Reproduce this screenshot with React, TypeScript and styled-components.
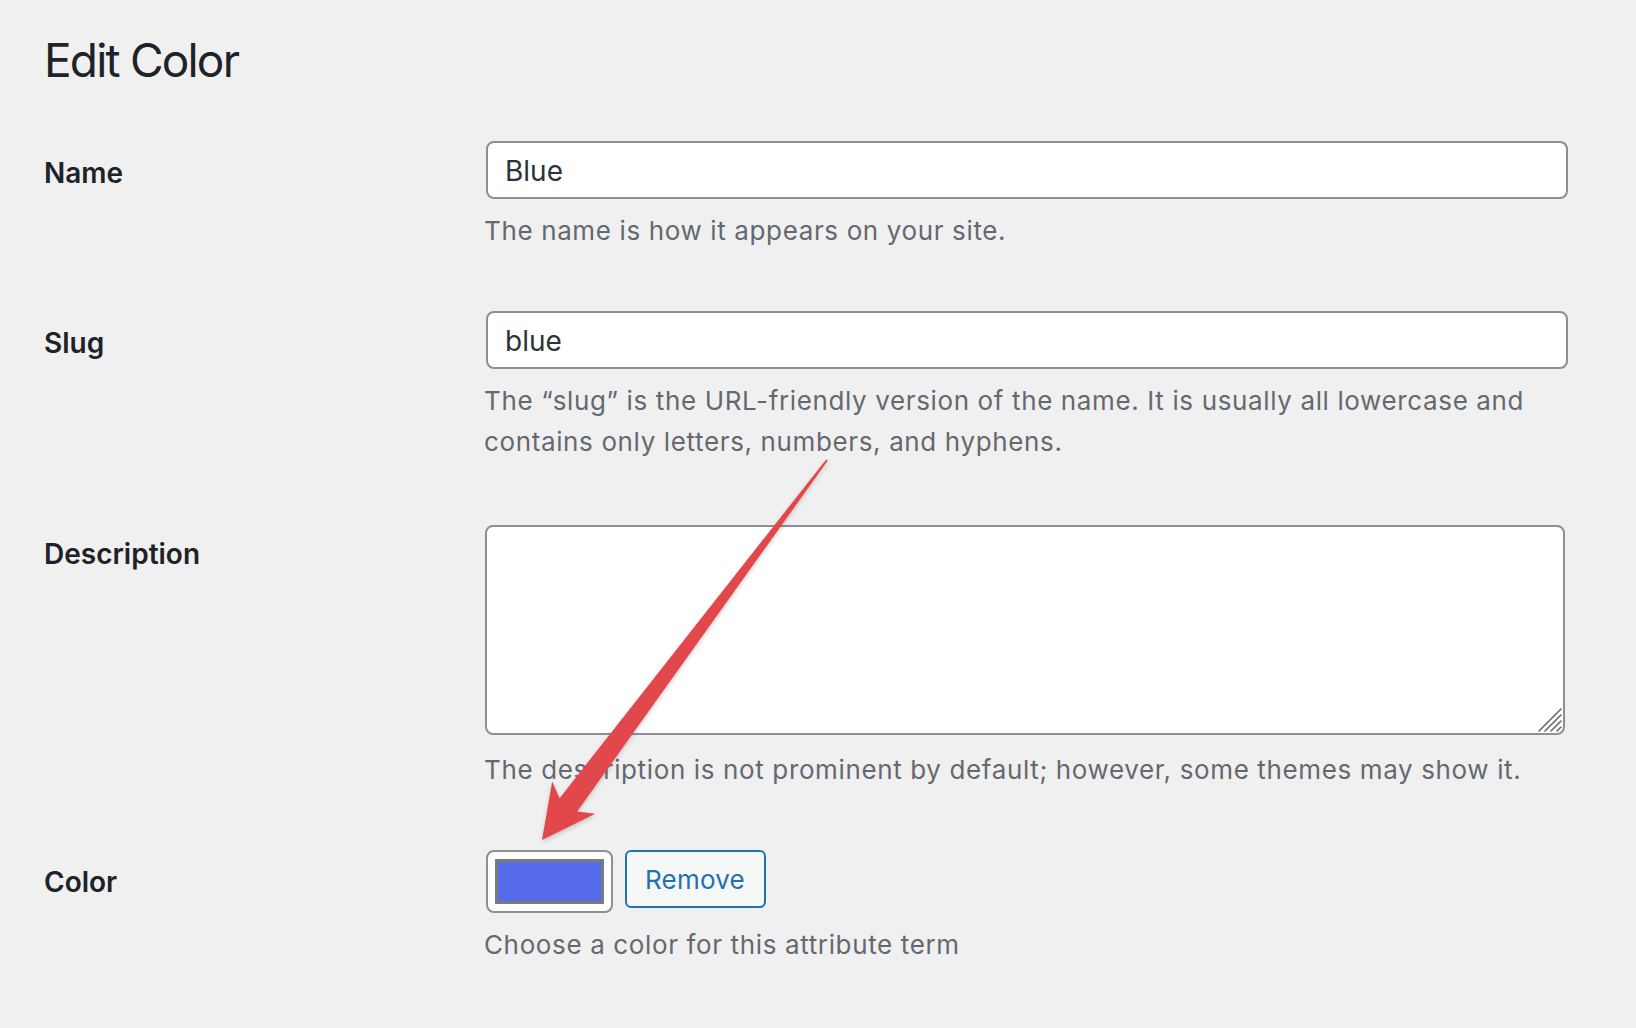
import React from "react";
import styled, { createGlobalStyle } from "styled-components";

const GlobalStyle = createGlobalStyle`
  html, body {
    margin: 0;
    padding: 0;
    background: #f0f0f1;
  }
  body {
    font-family: Inter, "Noto Sans", "Liberation Sans", sans-serif;
    color: #1d2327;
  }
  * { box-sizing: border-box; }
`;

const Page = styled.div`
  position: relative;
  width: 1636px;
  min-height: 1028px;
  padding: 30px 68px 0 44px;
`;

const Title = styled.h1`
  margin: 0 0 21px;
  font-size: 46px;
  line-height: 60px;
  font-weight: 400;
  color: #1d2327;
  letter-spacing: -1.8px;
`;

const Form = styled.div`
  display: flex;
  flex-direction: column;
`;

const Row = styled.div`
  display: grid;
  grid-template-columns: 442px 1fr;
  padding: 30px 0;
  align-items: start;
`;

const Label = styled.label`
  padding-top: 14px;
  font-size: 28px;
  line-height: 36px;
  font-weight: 600;
  color: #1d2327;
`;

const Field = styled.div`
  display: flex;
  flex-direction: column;
`;

const TextInput = styled.input`
  width: 100%;
  height: 58px;
  margin: 0;
  padding: 2px 17px 0;
  border: 2px solid #8c8f94;
  border-radius: 8px;
  background: #fff;
  font-family: inherit;
  font-size: 28px;
  color: #2c3338;
  outline: none;
`;

const AreaWrap = styled.div`
  position: relative;
  margin-top: 3px;
  margin-bottom: 3px;
`;

const TextArea = styled.textarea`
  display: block;
  width: calc(100% - 2px);
  height: 210px;
  margin: 0 0 0 -1px;
  padding: 10px 16px;
  border: 2px solid #8c8f94;
  border-radius: 8px;
  background: #fff;
  font-family: inherit;
  font-size: 28px;
  resize: none;
  outline: none;
`;

const Grip = styled.svg`
  position: absolute;
  right: 6px;
  bottom: 3px;
  width: 24px;
  height: 24px;
`;

const Hint = styled.p`
  margin: 11px 0 0 -2px;
  font-size: 26px;
  line-height: 41px;
  color: #646970;
  letter-spacing: 0.63px;
`;

const PickerRow = styled.div`
  display: flex;
  align-items: flex-start;
  gap: 12px;
`;

const Swatch = styled.button`
  width: 127px;
  height: 63px;
  padding: 7px;
  border: 2px solid #8c8f94;
  border-radius: 8px;
  background: #fff;
  cursor: pointer;
  display: flex;
`;

const SwatchFill = styled.span<{ $color: string }>`
  flex: 1;
  background: ${(p) => p.$color};
  border: 3px solid #7b7b7e;
`;

const RemoveButton = styled.button`
  height: 58px;
  padding: 0 19px 0 18px;
  border: 2px solid #2271b1;
  border-radius: 6px;
  background: #f6f7f7;
  color: #2271b1;
  font-family: inherit;
  font-size: 26px;
  letter-spacing: 0.2px;
  cursor: pointer;
`;

const Overlay = styled.svg`
  position: absolute;
  left: 0;
  top: 0;
  width: 1636px;
  height: 1028px;
  pointer-events: none;
`;

export default function App() {
  return (
    <Page>
      <GlobalStyle />
      <Title>Edit Color</Title>
      <Form>
        <Row>
          <Label>Name</Label>
          <Field>
            <TextInput defaultValue="Blue" />
            <Hint>The name is how it appears on your site.</Hint>
          </Field>
        </Row>
        <Row>
          <Label>Slug</Label>
          <Field>
            <TextInput defaultValue="blue" />
            <Hint>
              The “slug” is the URL-friendly version of the name. It is usually all lowercase and
              contains only letters, numbers, and hyphens.
            </Hint>
          </Field>
        </Row>
        <Row>
          <Label>Description</Label>
          <Field>
            <AreaWrap>
              <TextArea />
              <Grip viewBox="0 0 24 24">
                <g stroke="#646970" strokeWidth="1.6" strokeLinecap="round">
                  <line x1="1" y1="23" x2="23" y2="1" />
                  <line x1="7" y1="23" x2="23" y2="7" />
                  <line x1="13" y1="23" x2="23" y2="13" />
                  <line x1="19" y1="23" x2="23" y2="19" />
                </g>
              </Grip>
            </AreaWrap>
            <Hint>The description is not prominent by default; however, some themes may show it.</Hint>
          </Field>
        </Row>
        <Row>
          <Label>Color</Label>
          <Field>
            <PickerRow>
              <Swatch aria-label="Select color">
                <SwatchFill $color="#566cea" />
              </Swatch>
              <RemoveButton>Remove</RemoveButton>
            </PickerRow>
            <Hint>Choose a color for this attribute term</Hint>
          </Field>
        </Row>
      </Form>
      <Overlay viewBox="0 0 1636 1028">
        <defs>
          <filter id="arrowShadow" x="-20%" y="-20%" width="140%" height="140%">
            <feDropShadow dx="0" dy="2" stdDeviation="2" floodColor="#000" floodOpacity="0.2" />
          </filter>
        </defs>
        <polygon
          filter="url(#arrowShadow)"
          fill="#e2474c"
          points="826.2,459.4 559.6,798.2 552.2,781.4 542,840 595.4,813.8 577.2,811.4 827.8,460.6"
        />
      </Overlay>
    </Page>
  );
}
